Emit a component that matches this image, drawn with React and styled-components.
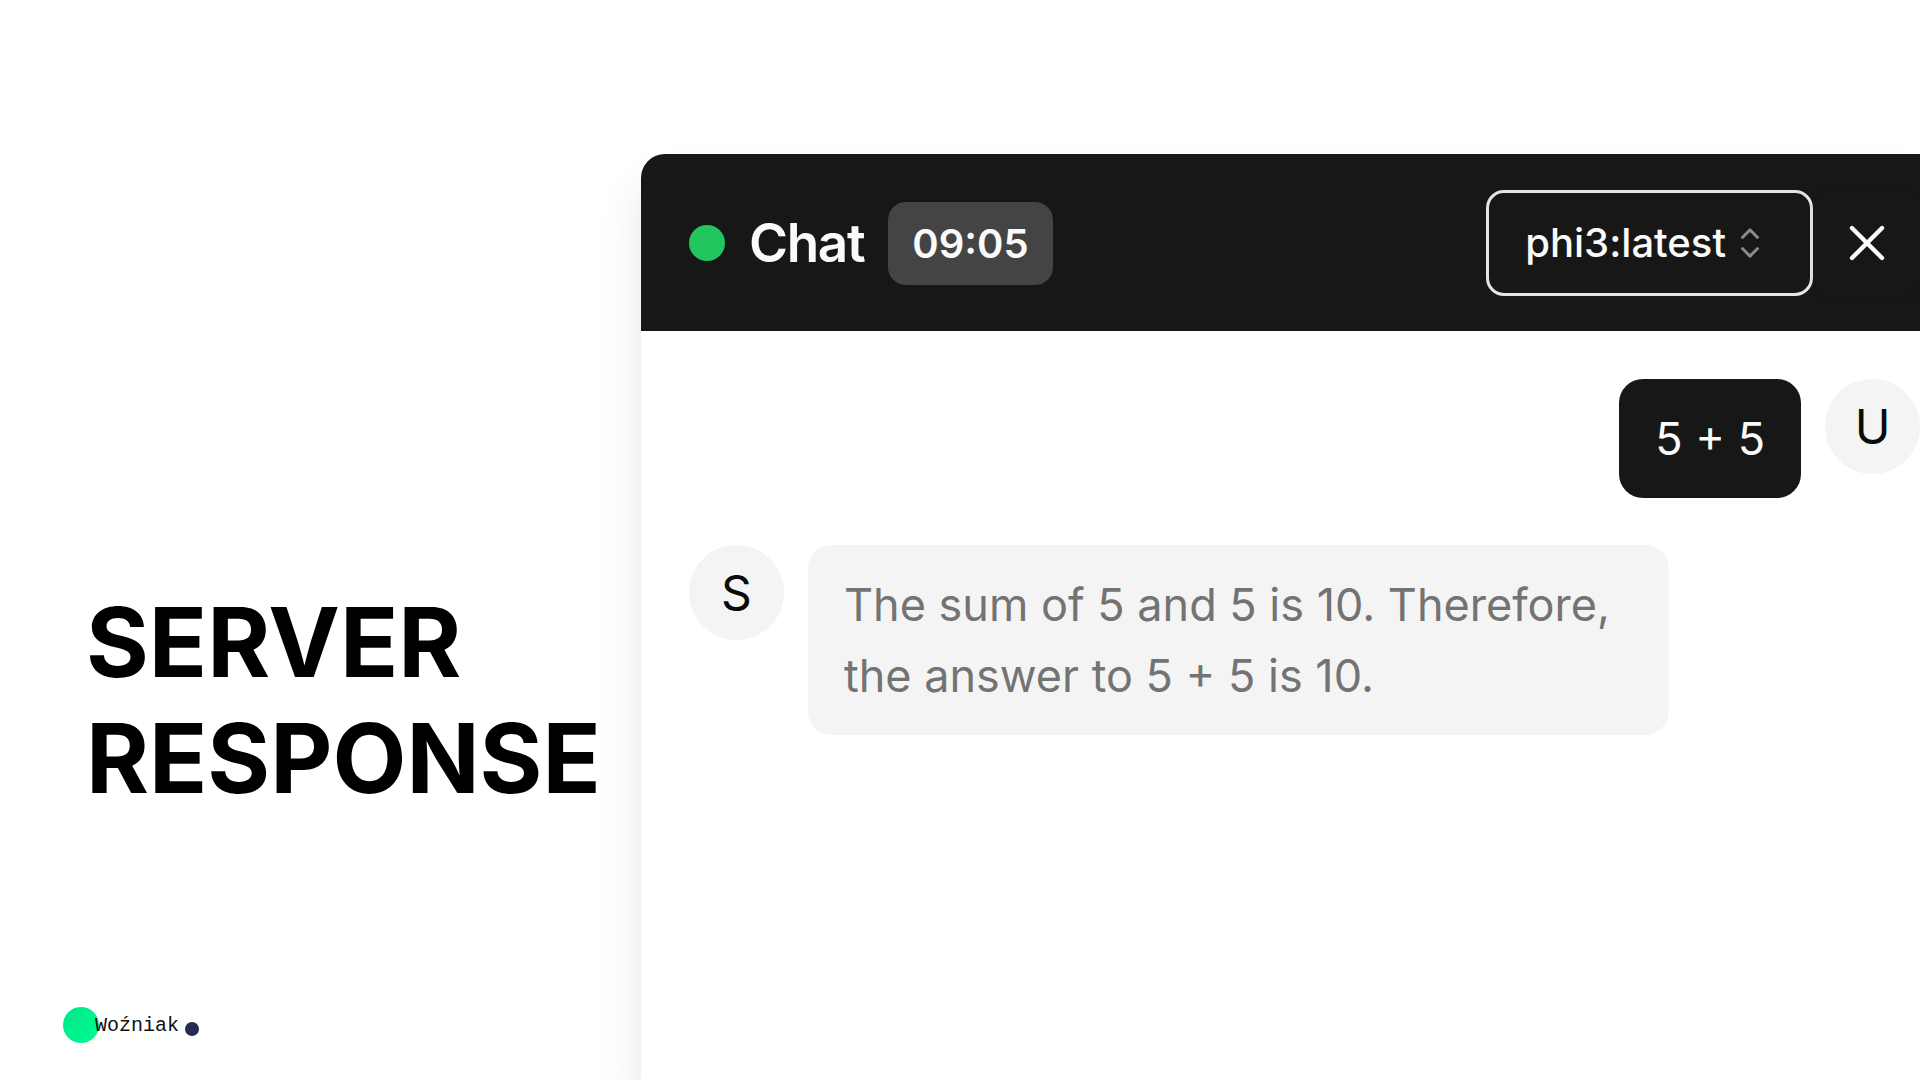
import React from "react";
import styled, { createGlobalStyle } from "styled-components";

const GlobalStyle = createGlobalStyle`
  * { box-sizing: border-box; }
  body { margin: 0; background: #fff; }
  #root { font-family: Inter, "Liberation Sans", sans-serif; color: #0a0a0a; }
`;

const Slide = styled.main`
  display: grid;
  grid-template-columns: 641px minmax(0, 1fr);
  min-height: 100vh;
  overflow: hidden;
  background: #fff;
`;

const Intro = styled.section`
  display: flex;
  flex-direction: column;
  padding: 584px 0 37px 86px;
`;

const Title = styled.h1`
  margin: 0;
  font-size: 96px;
  line-height: 116px;
  font-weight: 700;
  color: #000;
`;

const Brand = styled.footer`
  display: flex;
  align-items: center;
  margin: auto 0 0 -23px;
  font-family: "Liberation Mono", monospace;
  font-size: 20px;
  line-height: 36px;
  color: #111;
`;

const BrandDisc = styled.span`
  width: 36px;
  height: 36px;
  margin-right: -4px;
  border-radius: 50%;
  background: linear-gradient(135deg, #00e887, #00fb92);
`;

const BrandName = styled.span`
  position: relative;
  padding-top: 2px;
  line-height: 34px;
`;

const BrandDot = styled.span`
  width: 14px;
  height: 14px;
  margin: 8px 0 0 6px;
  border-radius: 50%;
  background: #262c4f;
`;

const Panel = styled.section`
  display: flex;
  flex-direction: column;
  margin-top: 154px;
  border-radius: 24px 0 0 0;
  background: #fff;
  box-shadow: 0 30px 45px rgba(0, 0, 0, 0.1);
`;

const Header = styled.header`
  display: flex;
  align-items: center;
  justify-content: space-between;
  padding: 36px 0 35px 48px;
  border-radius: 24px 0 0 0;
  background: #171717;
  color: #fafafa;
`;

const Group = styled.div`
  display: flex;
  align-items: center;
  gap: ${(p) => p.$gap || 0}px;
`;

const Status = styled.span`
  width: 36px;
  height: 36px;
  border-radius: 50%;
  background: #22c55e;
`;

const Heading = styled.h2`
  margin: 0;
  font-size: 53px;
  line-height: 71px;
  font-weight: 600;
  letter-spacing: -0.025em;
`;

const Timer = styled.time`
  padding: 6px 24px;
  border-radius: 18px;
  background: #444;
  font-size: 40px;
  line-height: 71px;
  font-weight: 600;
`;

const Picker = styled.label`
  display: flex;
  align-items: center;
  height: 106px;
  padding: 0 36px;
  border: 3px solid #e5e5e5;
  border-radius: 18px;
`;

const ModelSelect = styled.select`
  appearance: none;
  field-sizing: content;
  padding: 0;
  border: 0;
  outline: 0;
  background: transparent;
  color: inherit;
  font-family: inherit;
  font-size: 40px;
  line-height: 60px;
  font-weight: 500;
`;

const CloseButton = styled.button`
  display: grid;
  place-items: center;
  width: 107px;
  height: 106px;
  padding: 0;
  border: 0;
  border-radius: 18px;
  background: transparent;
  color: inherit;
  box-shadow: 0 3px 6px rgba(0, 0, 0, 0.08);
`;

const Messages = styled.div`
  display: flex;
  flex-direction: column;
  gap: 47px;
  padding: 48px 0 48px 48px;
`;

const Message = styled.article`
  display: flex;
  align-items: flex-start;
  justify-content: ${(p) => (p.$own ? "flex-end" : "flex-start")};
  gap: 24px;
`;

const Avatar = styled.span`
  display: grid;
  place-items: center;
  flex: none;
  width: 95px;
  height: 95px;
  border-radius: 50%;
  background: #f4f4f4;
  font-size: 48px;
`;

const Bubble = styled.p`
  margin: 0;
  max-width: 861px;
  padding: 24px 36px;
  border-radius: 24px;
  font-size: 45px;
  line-height: 71px;
  background: ${(p) => (p.$own ? "#171717" : "#f4f4f4")};
  color: ${(p) => (p.$own ? "#fafafa" : "#737373")};
`;

const SortIcon = () => (
  <svg width="48" height="48" viewBox="0 0 15 15" fill="none" stroke="#8b8b8b" strokeWidth="0.9" strokeLinejoin="round" aria-hidden="true">
    <path d="M4.9 6 7.5 3.4l2.6 2.6M4.9 9l2.6 2.6L10.1 9" />
  </svg>
);

const CloseIcon = () => (
  <svg width="48" height="48" viewBox="0 0 15 15" fill="none" stroke="currentColor" strokeWidth="1.35" strokeLinecap="round" aria-hidden="true">
    <path d="M2.8 2.8l9.4 9.4M12.2 2.8l-9.4 9.4" />
  </svg>
);

export default function App() {
  return (
    <>
      <GlobalStyle />
      <Slide>
        <Intro>
          <Title>
            SERVER
            <br />
            RESPONSE
          </Title>
          <Brand>
            <BrandDisc />
            <BrandName>Woźniak</BrandName>
            <BrandDot />
          </Brand>
        </Intro>
        <Panel>
          <Header>
            <Group $gap={24}>
              <Status />
              <Heading>Chat</Heading>
              <Timer>09:05</Timer>
            </Group>
            <Group>
              <Picker>
                <ModelSelect aria-label="Model" defaultValue="phi3:latest">
                  <option>phi3:latest</option>
                </ModelSelect>
                <SortIcon />
              </Picker>
              <CloseButton type="button" aria-label="Close chat">
                <CloseIcon />
              </CloseButton>
            </Group>
          </Header>
          <Messages>
            <Message $own>
              <Bubble $own>5 + 5</Bubble>
              <Avatar>U</Avatar>
            </Message>
            <Message>
              <Avatar>S</Avatar>
              <Bubble>The sum of 5 and 5 is 10. Therefore, the answer to 5 + 5 is 10.</Bubble>
            </Message>
          </Messages>
        </Panel>
      </Slide>
    </>
  );
}
